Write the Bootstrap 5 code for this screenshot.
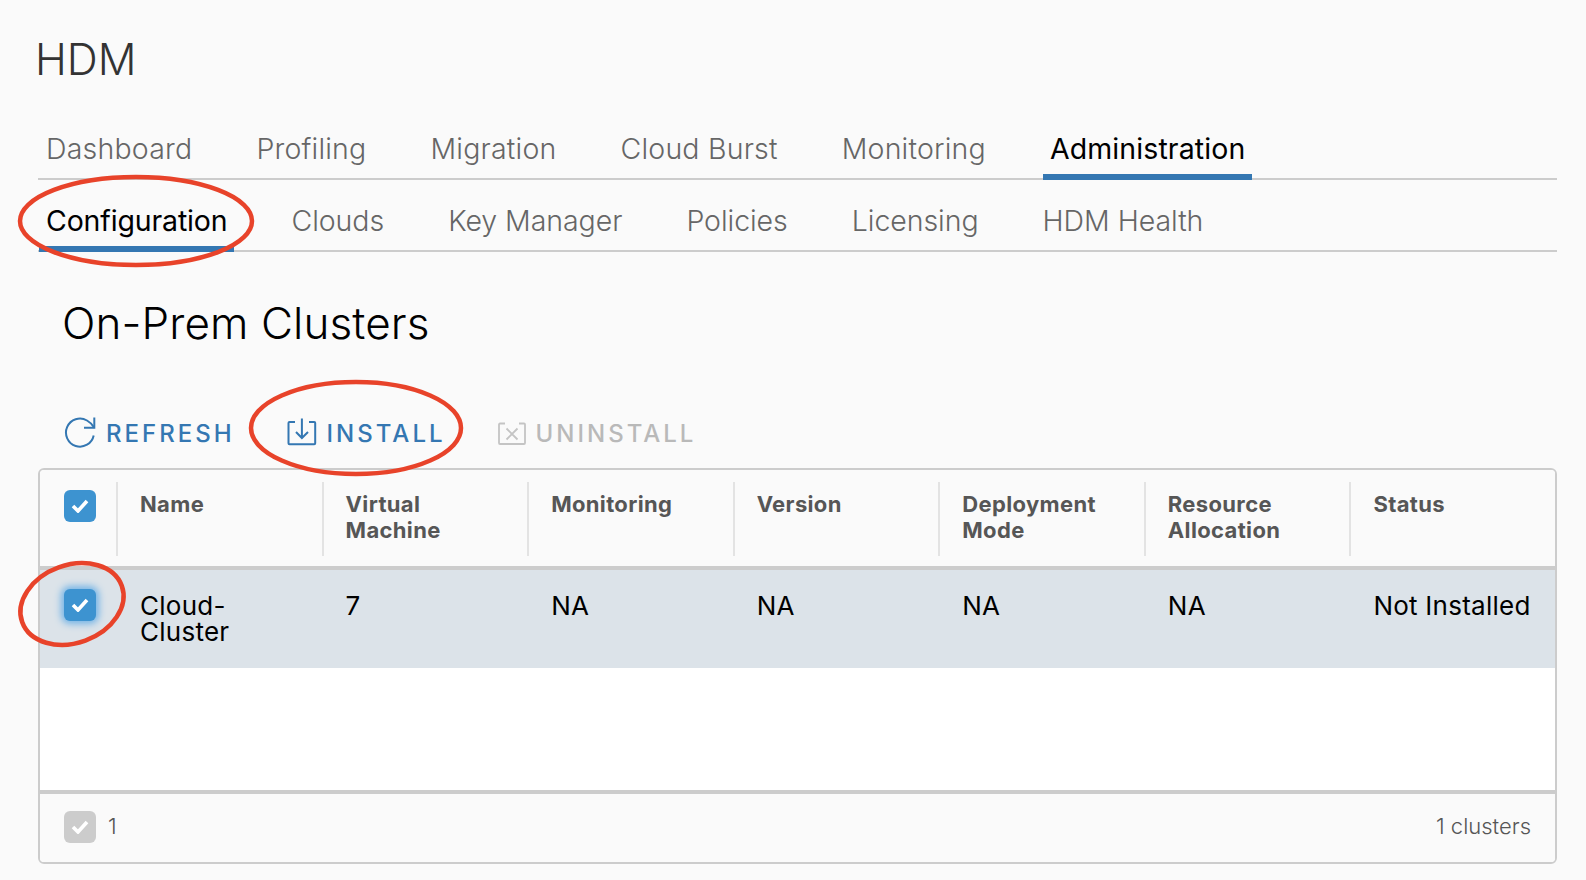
<!DOCTYPE html>
<html lang="en">
<head>
<meta charset="UTF-8">
<title>HDM</title>
<link href="https://cdn.jsdelivr.net/npm/bootstrap@5.3.3/dist/css/bootstrap.min.css" rel="stylesheet">
<script src="https://cdn.jsdelivr.net/npm/bootstrap@5.3.3/dist/js/bootstrap.bundle.min.js"></script>
<style>
  html, body { height: 880px; overflow: hidden; }
  body { background: #fafafa; font-family: Inter, "Liberation Sans", sans-serif; color: #000; position: relative; }
  .page-wrap { padding: 32px 29px 0 38px; }
  .app-title { font-size: 43px; font-weight: 300; line-height: 54px; color: #333; margin: 0 0 40px -3px; letter-spacing: 0; }
  .tab-bar { border-bottom: 2px solid #ccc; height: 54px; gap: 50px; flex-wrap: nowrap; padding-left: 1px; }
  .tab-bar + .tab-bar { height: 72px; }
  .tab-bar .nav-link { font-size: 28.5px; font-weight: 300; line-height: 38px; padding: 4px 7px 0; color: #666; border-bottom: 6px solid transparent; margin-bottom: -2px; height: 54px; letter-spacing: .2px; }
  .tab-bar .nav-link.active { color: #000; border-bottom-color: #3477b2; font-weight: 400; letter-spacing: .1px; }
  .tab-bar + .tab-bar .nav-link { height: 72px; padding-top: 22px; letter-spacing: -.05px; }
  .tab-bar + .tab-bar .nav-link.active { letter-spacing: -.15px; }
  .page-head { font-size: 44px; font-weight: 300; line-height: 54px; margin: 44px 0 0 24px; letter-spacing: .1px; }
  .tool-row { margin: 60px 0 0 26px; gap: 52px; height: 48px; }
  .tool-btn { font-size: 24px; font-weight: 500; letter-spacing: 3px; color: #3477b2; padding: 0; border: 0; display: flex; align-items: center; gap: 10px; line-height: 32px; text-transform: uppercase; }
  .tool-btn:disabled { color: #b9b9b9; opacity: 1; }
  .data-grid { margin-top: 10px; border: 2px solid #ccc; border-radius: 6px; height: 396px; background: #fff; overflow: hidden; display: flex; flex-direction: column; }
  .data-grid table { table-layout: fixed; width: 100%; margin: 0; --bs-table-bg: transparent; }
  .col-check { width: 76px; }
  .data-grid thead th { background: #fafafa; font-size: 22px; font-weight: 700; line-height: 26px; color: #565656; height: 98px; padding: 0 0 0 24px; vertical-align: top; border-bottom: 4px solid #ccc; position: relative; letter-spacing: .35px; }
  .data-grid thead th span { display: block; padding-top: 21px; }
  .data-grid thead th.sep::before { content: ""; position: absolute; left: 0; top: 12px; height: 74px; width: 2px; background: #e3e3e3; }
  .data-grid thead th:first-child { padding: 0; }
  .data-grid tbody td { background: #dce3e9; font-size: 26px; font-weight: 400; line-height: 26px; height: 100px; padding: 22px 0 0 24px; vertical-align: top; border: 0; color: #000; box-shadow: none; letter-spacing: .25px; }
  .data-grid tbody td:first-child { padding: 0; }
  .row-text { margin-top: 1px; display: block; }
  .tick-box { width: 32px; height: 32px; border-radius: 6px; background: #3d93d0; display: flex; align-items: center; justify-content: center; margin-left: 24px; }
  thead .tick-box { margin-top: 20px; }
  tbody .tick-box { margin-top: 19px; box-shadow: 0 0 7px 3px #74b4e6; }
  .tick-box.off { background: #ccc; margin: 0; }
  .grid-fill { flex: 1 1 auto; background: #fff; }
  .grid-foot { background: #fafafa; border-top: 4px solid #ccc; height: 72px; padding: 0 24px 3px; color: #565656; font-size: 22px; font-weight: 300; }
  .foot-count { gap: 12px; }
  .mark-layer { position: absolute; left: 0; top: 0; pointer-events: none; }
</style>
</head>
<body>
<div class="page-wrap">
  <h1 class="app-title">HDM</h1>
  <ul class="nav tab-bar">
    <li class="nav-item"><a class="nav-link" href="#">Dashboard</a></li>
    <li class="nav-item"><a class="nav-link" href="#">Profiling</a></li>
    <li class="nav-item"><a class="nav-link" href="#">Migration</a></li>
    <li class="nav-item"><a class="nav-link" href="#">Cloud Burst</a></li>
    <li class="nav-item"><a class="nav-link" href="#">Monitoring</a></li>
    <li class="nav-item"><a class="nav-link active" href="#">Administration</a></li>
  </ul>
  <ul class="nav tab-bar">
    <li class="nav-item"><a class="nav-link active" href="#">Configuration</a></li>
    <li class="nav-item"><a class="nav-link" href="#">Clouds</a></li>
    <li class="nav-item"><a class="nav-link" href="#">Key Manager</a></li>
    <li class="nav-item"><a class="nav-link" href="#">Policies</a></li>
    <li class="nav-item"><a class="nav-link" href="#">Licensing</a></li>
    <li class="nav-item"><a class="nav-link" href="#">HDM Health</a></li>
  </ul>
  <h2 class="page-head">On-Prem Clusters</h2>
  <div class="d-flex align-items-center tool-row">
    <button class="btn tool-btn" type="button">
      <svg width="32" height="34" viewBox="0 0 32 34" fill="none" stroke="#3477b2" stroke-width="2"><path d="M29.700 18.500A14 14 0 1 1 23 3.500Q27.500 6 30.300 10.700"/><path d="M30.300 .5V10.700H20"/></svg>
      Refresh
    </button>
    <button class="btn tool-btn" type="button">
      <svg width="30" height="32" viewBox="0 0 30 32" fill="none" stroke="#3477b2" stroke-width="2"><path d="M8 4H2.500a1 1 0 0 0-1 1v20.300a1 1 0 0 0 1 1h24.700a1 1 0 0 0 1-1V5a1 1 0 0 0-1-1H22"/><path d="M14.900 .5V20M9 14l5.900 6L21 14"/></svg>
      Install
    </button>
    <button class="btn tool-btn" type="button" disabled>
      <svg width="28" height="24" viewBox="0 0 28 24" fill="none" stroke="#c4c4c4" stroke-width="1.800"><path d="M7 1.500H2a1 1 0 0 0-1 1V21a1 1 0 0 0 1 1h24a1 1 0 0 0 1-1V2.500a1 1 0 0 0-1-1h-5"/><path d="M8.500 6.500l11 11M19.500 6.500l-11 11"/></svg>
      Uninstall
    </button>
  </div>
  <div class="data-grid">
    <table class="table">
      <colgroup><col class="col-check"><col><col><col><col><col><col><col></colgroup>
      <thead>
        <tr>
          <th><div class="tick-box"><svg width="18" height="14" viewBox="0 0 18 14" fill="none" stroke="#fff" stroke-width="3.600"><path d="M2 7l5 5 9-10"/></svg></div></th>
          <th class="sep"><span>Name</span></th>
          <th class="sep"><span>Virtual<br>Machine</span></th>
          <th class="sep"><span>Monitoring</span></th>
          <th class="sep"><span>Version</span></th>
          <th class="sep"><span>Deployment Mode</span></th>
          <th class="sep"><span>Resource Allocation</span></th>
          <th class="sep"><span>Status</span></th>
        </tr>
      </thead>
      <tbody>
        <tr>
          <td><div class="tick-box"><svg width="18" height="14" viewBox="0 0 18 14" fill="none" stroke="#fff" stroke-width="3.600"><path d="M2 7l5 5 9-10"/></svg></div></td>
          <td><span class="row-text">Cloud-<br>Cluster</span></td>
          <td><span class="row-text">7</span></td>
          <td><span class="row-text">NA</span></td>
          <td><span class="row-text">NA</span></td>
          <td><span class="row-text">NA</span></td>
          <td><span class="row-text">NA</span></td>
          <td><span class="row-text text-nowrap">Not Installed</span></td>
        </tr>
      </tbody>
    </table>
    <div class="grid-fill"></div>
    <div class="grid-foot d-flex align-items-center justify-content-between">
      <div class="d-flex align-items-center foot-count">
        <div class="tick-box off"><svg width="18" height="14" viewBox="0 0 18 14" fill="none" stroke="#fff" stroke-width="3.600"><path d="M2 7l5 5 9-10"/></svg></div>
        <span>1</span>
      </div>
      <span>1 clusters</span>
    </div>
  </div>
</div>
<svg class="mark-layer" width="1586" height="880" viewBox="0 0 1586 880" fill="none" stroke="#e8432a" stroke-width="4.500">
  <ellipse cx="136" cy="221" rx="116" ry="44"/>
  <ellipse cx="356" cy="428" rx="105" ry="46"/>
  <ellipse cx="72" cy="604" rx="53" ry="39" transform="rotate(-20 72 604)"/>
</svg>
</body>
</html>
